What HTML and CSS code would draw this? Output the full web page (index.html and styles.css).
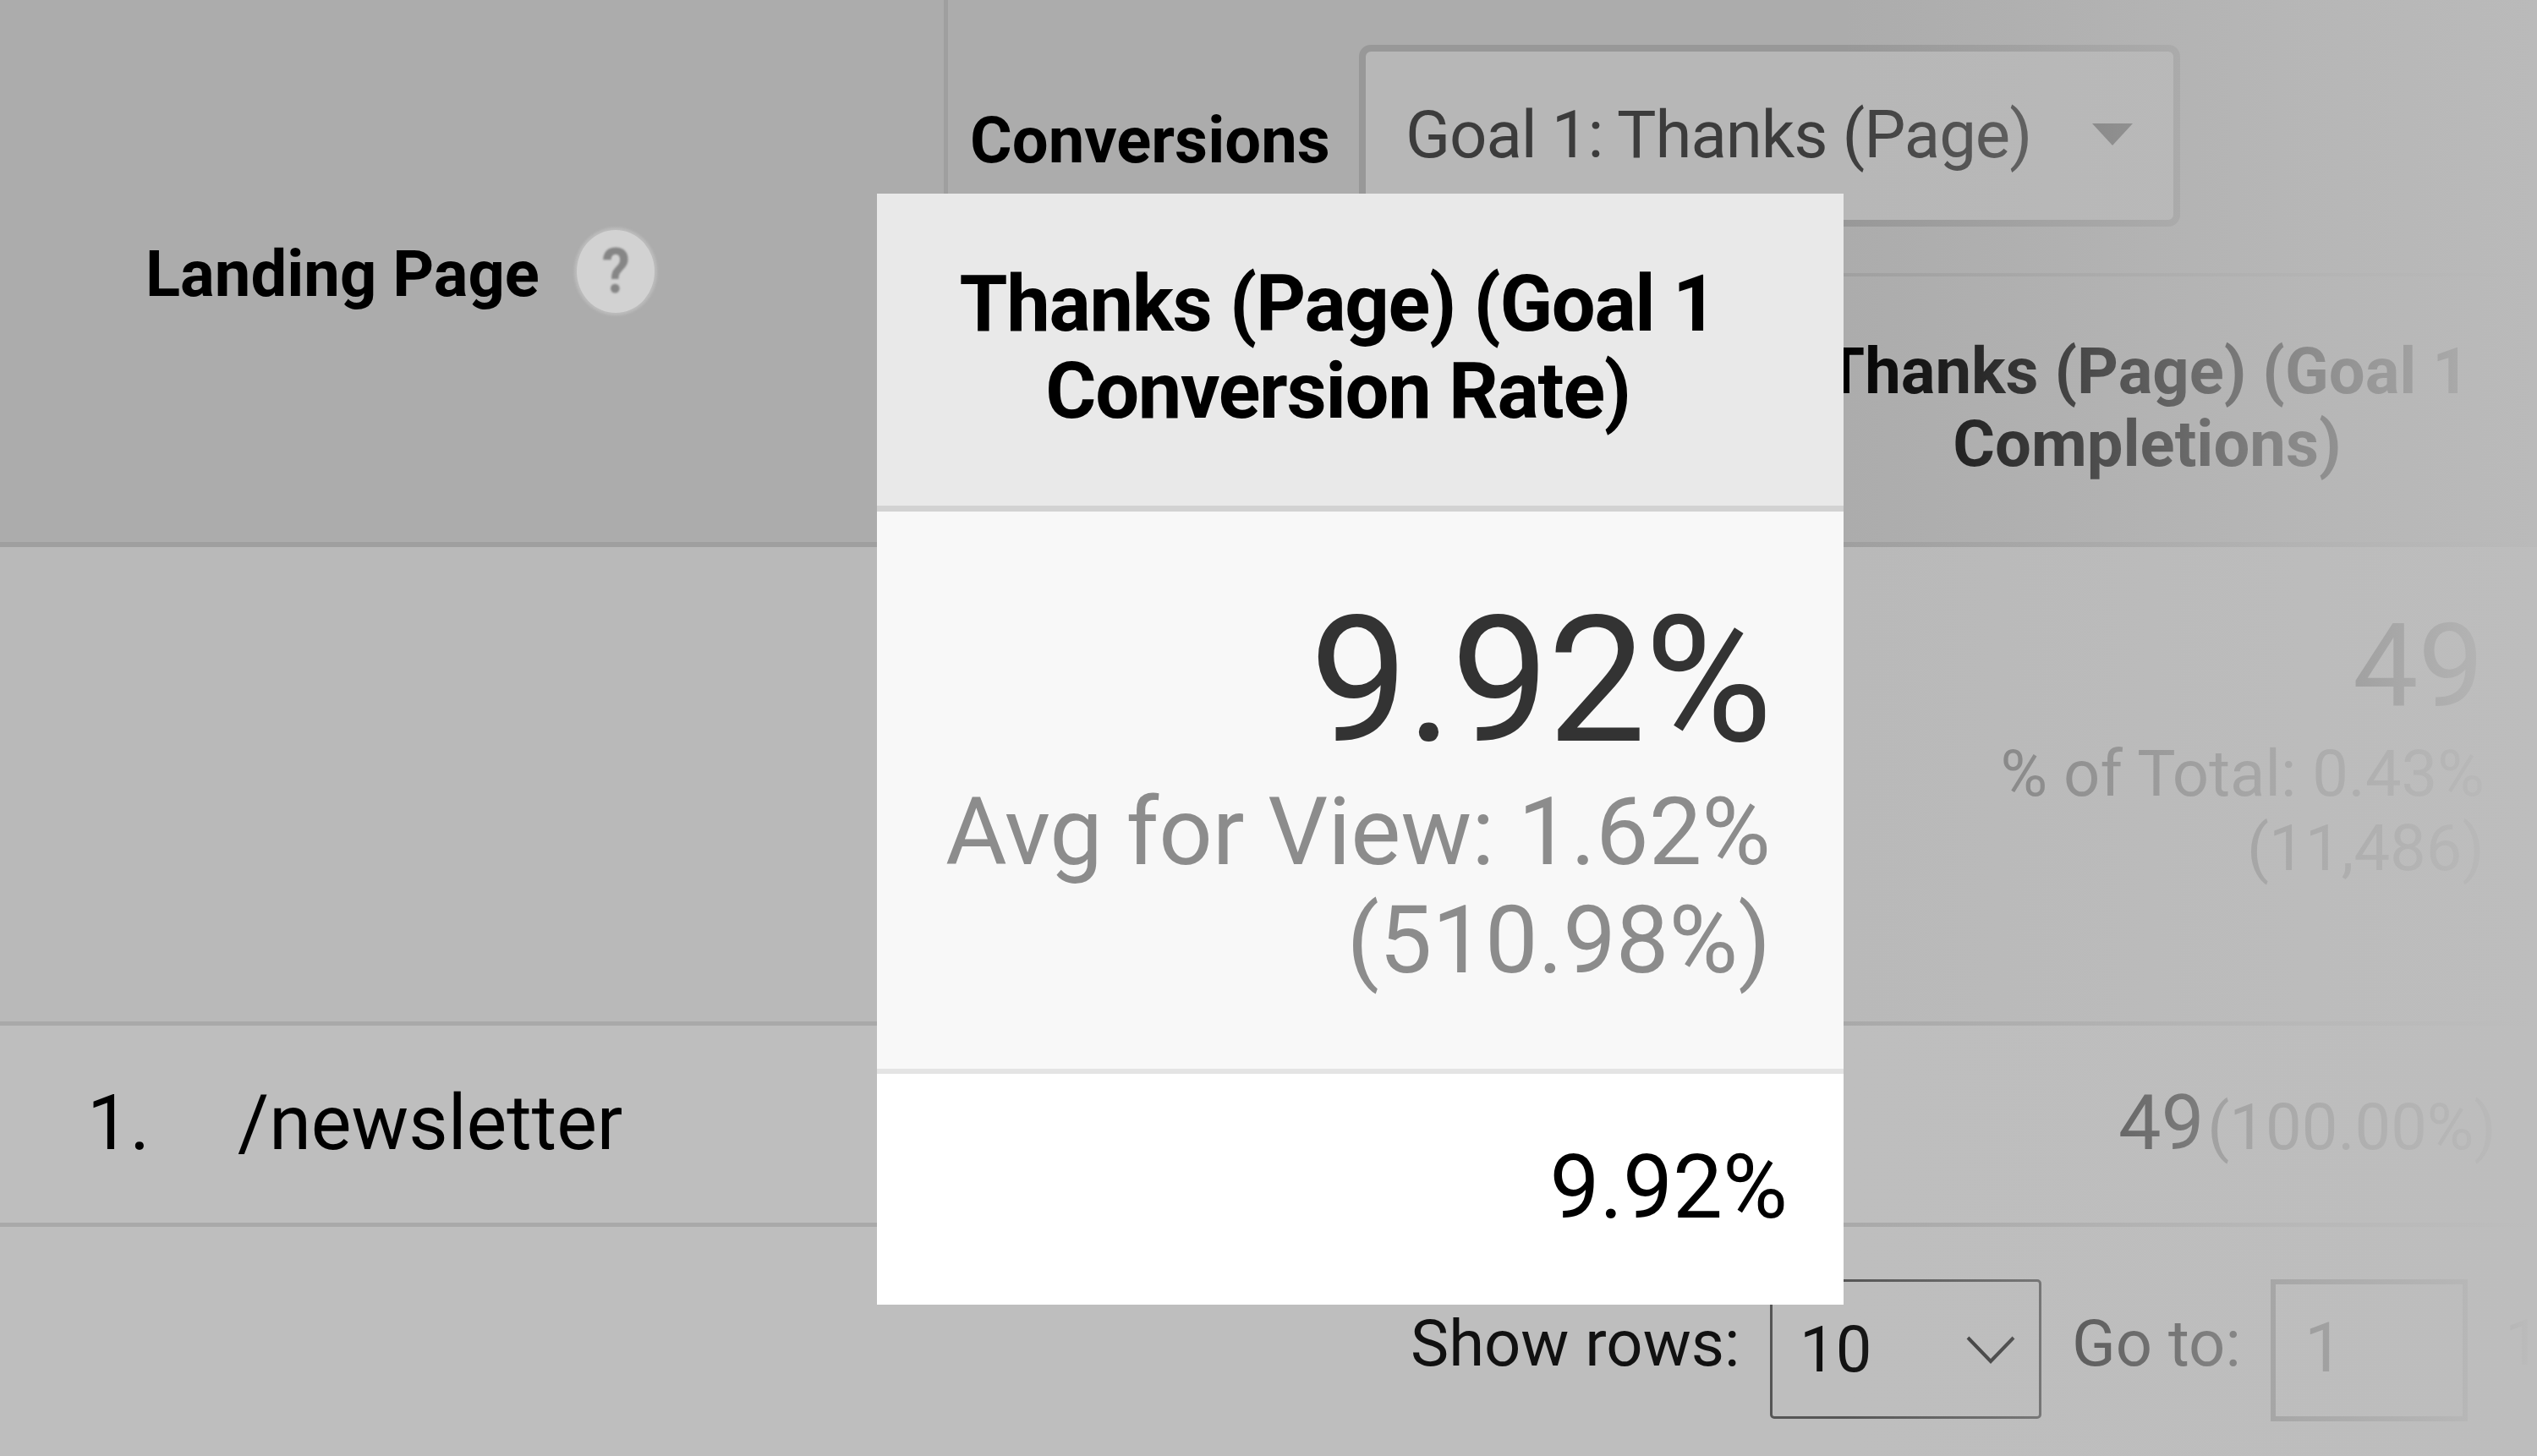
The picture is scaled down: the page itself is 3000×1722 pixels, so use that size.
FILE: index.html
```html
<!DOCTYPE html>
<html lang="en">
<head>
<meta charset="utf-8">
<title>Landing Page report</title>
<link rel="stylesheet" href="styles.css">
</head>
<body>
<main class="page">
  <header class="head">
    <div class="landing">
      <span class="landing-label">Landing Page</span>
      <span class="help"><span class="help-mark">?</span></span>
    </div>
    <div class="conv">
      <div class="conv-top">
        <span class="conv-label">Conversions</span>
        <div class="goal-select">
          <span class="goal-text">Goal 1: Thanks (Page)</span>
          <span class="caret"></span>
        </div>
      </div>
      <div class="conv-metric">
        <div class="metric-title">Thanks (Page) (Goal 1<br>Completions)</div>
      </div>
    </div>
  </header>

  <section class="totals">
    <div class="total-big">49</div>
    <div class="total-sub">% of Total: 0.43%<br>(11,486)</div>
  </section>

  <section class="row">
    <span class="row-num">1.</span>
    <span class="row-path">/newsletter</span>
    <span class="row-val">49</span>
    <span class="row-pct">(100.00%)</span>
  </section>

  <footer class="foot">
    <span class="foot-label">Show rows:</span>
    <div class="rows-select">
      <span class="rows-val">10</span>
      <svg class="chev" viewBox="0 0 58 34" aria-hidden="true"><path d="M2 3 L29 31 L56 3"/></svg>
    </div>
    <span class="goto">Go to:</span>
    <div class="goto-input">1</div>
    <span class="page-count">1</span>
  </footer>

  <div class="fade fade-head"></div>
  <div class="fade fade-body"></div>

  <aside class="tip">
    <div class="tip-head">Thanks (Page) (Goal 1<br>Conversion Rate)</div>
    <div class="tip-body">
      <div class="tip-big">9.92%</div>
      <div class="tip-avg">Avg for View: 1.62%<br>(510.98%)</div>
    </div>
    <div class="tip-row">9.92%</div>
  </aside>
</main>
</body>
</html>
```
FILE: styles.css
```css
* { box-sizing: border-box; }
html, body { margin: 0; padding: 0; }
body { font-family: Roboto, "Liberation Sans", sans-serif; background: #bebebe; }

.page { position: relative; width: 3000px; height: 1722px; overflow: hidden; display: flex; flex-direction: column; background: #bebebe; color: #000; }

.head { height: 647px; flex: none; display: grid; grid-template-columns: 1116px 1fr; background: #acacac; border-bottom: 6px solid #9f9f9f; }
.landing { display: flex; align-items: center; padding: 0 0 0 172px; gap: 44px; }
.landing-label { font-size: 76px; font-weight: 700; line-height: 90px; margin-top: 7px; }
.help { width: 92px; height: 98px; border-radius: 50%; background: #d2d2d2; box-shadow: 0 0 3px 3px #bcbcbc; display: flex; align-items: center; justify-content: center; }
.help-mark { color: #868686; font-size: 74px; font-weight: 700; line-height: 80px; transform: scaleX(.9); filter: blur(1px); }

.conv { border-left: 5px solid #9f9f9f; display: flex; flex-direction: column; }
.conv-top { height: 327px; flex: none; display: flex; padding: 53px 0 0 26px; border-bottom: 4px solid #a0a0a0; }
.conv-label { font-size: 76px; font-weight: 700; line-height: 90px; margin-top: 68px; width: 460px; flex: none; }
.goal-select { width: 971px; height: 215px; border: 8px solid #989898; border-radius: 14px; background: #b7b7b7; padding: 0 0 0 47px; display: flex; }
.goal-text { font-size: 78px; letter-spacing: -1.1px; color: #3c3c3c; line-height: 90px; margin-top: 54px; width: 812px; flex: none; }
.caret { width: 0; height: 0; margin-top: 85px; border-left: 24px solid transparent; border-right: 24px solid transparent; border-top: 26px solid #6b6b6b; }
.conv-metric { flex: 1; display: flex; justify-content: flex-end; }
.metric-title { width: 810px; margin-right: 56px; padding-top: 69px; text-align: center; font-size: 76px; font-weight: 700; line-height: 86px; }

.totals { height: 566px; flex: none; background: #b9b9b9; border-bottom: 5px solid #a9a9a9; text-align: right; padding: 71px 62px 0 0; }
.total-big { font-size: 138px; line-height: 140px; color: #333; padding-right: 1px; }
.total-sub { font-size: 76px; line-height: 88px; color: #777; margin-top: 13px; }

.row { height: 238px; flex: none; border-bottom: 5px solid #a9a9a9; display: flex; align-items: baseline; padding: 63px 48px 0 103px; font-size: 90px; }
.row-num { width: 178px; flex: none; }
.row-path { flex: 1; }
.row-val { color: #222; }
.row-pct { font-size: 76px; color: #777; margin-left: 4px; }

.foot { flex: 1; display: flex; align-items: flex-start; padding: 62px 0 0 1668px; }
.foot-label { font-size: 76px; line-height: 90px; width: 425px; flex: none; color: #111; margin-top: 31px; }
.rows-select { width: 321px; height: 165px; flex: none; border: 3px solid #555; border-radius: 5px; display: flex; align-items: center; justify-content: space-between; padding: 0 28px 0 32px; }
.rows-val { font-size: 76px; color: #111; }
.chev { width: 58px; height: 34px; }
.chev path { fill: none; stroke: #2a2a2a; stroke-width: 4; }
.goto { font-size: 76px; line-height: 90px; color: #222; margin: 31px 0 0 36px; width: 235px; flex: none; }
.goto-input { width: 233px; height: 168px; flex: none; border: 6px solid #707070; padding-left: 34px; font-size: 82px; line-height: 150px; color: #444; }
.page-count { font-size: 76px; line-height: 150px; color: #000; margin-left: 44px; }

.fade { position: absolute; left: 2180px; right: 0; }
.fade-head { top: 0; height: 647px; background: linear-gradient(to right, rgba(186,186,186,0) 0, rgba(186,186,186,.3) 220px, rgba(186,186,186,.72) 520px, rgba(186,186,186,.92) 740px, rgba(186,186,186,1) 820px); }
.fade-body { top: 647px; bottom: 0; background: linear-gradient(to right, rgba(189,189,189,0) 0, rgba(189,189,189,.3) 220px, rgba(189,189,189,.72) 520px, rgba(189,189,189,.92) 740px, rgba(189,189,189,1) 820px); }

.tip { position: absolute; left: 1037px; top: 229px; width: 1143px; height: 1314px; display: flex; flex-direction: column; background: #fff; }
.tip-head { height: 376px; flex: none; background: #e9e9e9; border-bottom: 7px solid #d2d2d2; padding: 79px 113px 0 60px; text-align: center; font-size: 92px; letter-spacing: -1.3px; font-weight: 700; line-height: 103px; }
.tip-body { height: 665px; flex: none; background: #f8f8f8; border-bottom: 6px solid #e4e4e4; padding: 96px 86px 0 0; text-align: right; }
.tip-big { font-size: 207px; letter-spacing: -2px; line-height: 210px; color: #333; }
.tip-avg { font-size: 111.5px; line-height: 128px; color: #8c8c8c; margin-top: 9px; }
.tip-row { flex: 1; padding: 70px 66px 0 0; text-align: right; font-size: 105px; line-height: 130px; color: #000; }
```
